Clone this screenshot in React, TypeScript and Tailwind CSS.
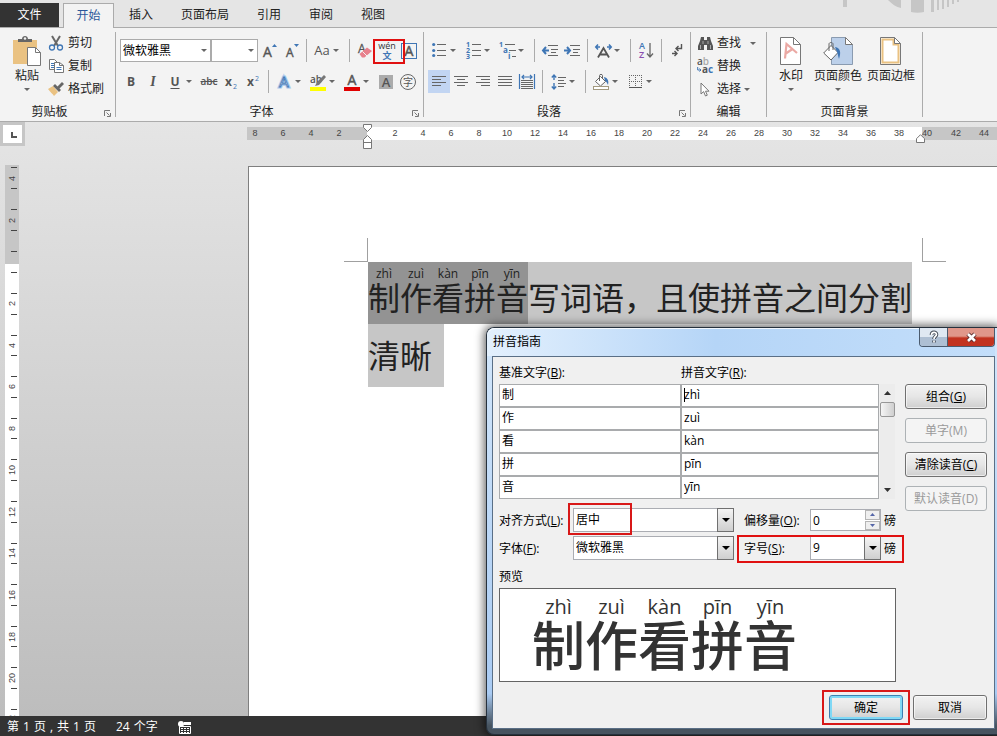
import type { ReactNode } from "react";

function Caret({ className = "" }: { className?: string }) {
  return (
    <svg className={`h-[3px] w-[6px] shrink-0 ${className}`} viewBox="0 0 6 3" aria-hidden="true">
      <path d="M0 0h6L3 3z" fill="#666" />
    </svg>
  );
}

function Svg({ w, h, children }: { w: number; h: number; children: ReactNode }) {
  return (
    <svg width={w} height={h} viewBox={`0 0 ${w} ${h}`} className="shrink-0 overflow-visible" aria-hidden="true">
      {children}
    </svg>
  );
}

function Tool({ label, active, menu, children }: { label: string; active?: boolean; menu?: boolean; children: ReactNode }) {
  return (
    <button
      type="button"
      aria-label={label}
      className={`flex h-full shrink-0 items-center ${menu ? "w-[34px]" : "w-[22px]"} ${active ? "bg-[#c2d5f2]" : ""}`}
    >
      <span className="flex w-[22px] shrink-0 items-center justify-center">{children}</span>
      {menu && <Caret />}
    </button>
  );
}

function Sep() {
  return <span className="mx-1 h-full w-px shrink-0 bg-[#ababab]" />;
}

function Group({ title, width, launcher, children }: { title: string; width: string; launcher?: boolean; children: ReactNode }) {
  return (
    <section className={`relative my-1 flex shrink-0 flex-col border-r border-[#ababab] ${width}`}>
      <div className="h-[75px]">{children}</div>
      <h2 className={`h-[10px] text-center leading-[10px] ${launcher ? "pr-4" : ""}`}>{title}</h2>
      {launcher && (
        <button type="button" aria-label={`${title}设置`} className="absolute right-1 bottom-0">
          <Svg w={7} h={7}>
            <path d="M.5 6V.5H6" fill="none" stroke="#777" />
            <path d="M2.500 2.500l3 3M6.500 3v3.500H3" fill="none" stroke="#777" />
          </Svg>
        </button>
      )}
    </section>
  );
}

function SmallCommand({ icon, text, menu }: { icon: ReactNode; text: string; menu?: string }) {
  return (
    <button type="button" className="flex h-[22px] items-center">
      <span className="mr-1 flex w-4 justify-center">{icon}</span>
      {text}
      {menu && <Caret className={menu} />}
    </button>
  );
}

function BigCommand({ icon, text, menu }: { icon: ReactNode; text: string; menu?: boolean }) {
  return (
    <button type="button" className="flex flex-col items-center pt-1">
      <span className="flex h-[30px] items-center">{icon}</span>
      <span className="mt-0.5 leading-4 whitespace-nowrap">{text}</span>
      {menu && <Caret className="mt-1" />}
    </button>
  );
}

const lines = (rows: [number, number, number][]) =>
  rows.map(([x, y, w]) => <rect key={`${x}-${y}`} x={x} y={y} width={w} height={1} fill="#666" />);

function Ribbon() {
  return (
    <div className="flex border-y border-[#ababab] bg-[#f3f3f3]">
      <Group title="剪贴板" width="w-[116px]" launcher>
        <div className="flex gap-[7px] pl-[13px]">
          <BigCommand
            text="粘贴"
            menu
            icon={
              <Svg w={28} h={30}>
                <path d="M0 4h24v24H0z" fill="#eac282" />
                <path d="M5 6V3h4c0-4 6-4 6 0h4v3z" fill="#666" />
                <circle cx="12" cy="2.500" r="1.200" fill="#f3f3f3" />
                <path d="M14.500 11.500h8l5 5v13h-13z" fill="#fff" stroke="#777" />
                <path d="M22.500 11.500v5h5" fill="none" stroke="#777" />
              </Svg>
            }
          />
          <div className="flex flex-col gap-px whitespace-nowrap">
            <SmallCommand
              text="剪切"
              icon={
                <Svg w={14} h={15}>
                  <path d="M3 0l6 10M11 0L5 10" stroke="#666" strokeWidth="2" />
                  <circle cx="3" cy="11.500" r="2.500" fill="none" stroke="#3f76b5" strokeWidth="1.300" />
                  <circle cx="11" cy="11.500" r="2.500" fill="none" stroke="#3f76b5" strokeWidth="1.300" />
                </Svg>
              }
            />
            <SmallCommand
              text="复制"
              icon={
                <Svg w={15} h={14}>
                  <path d="M.5.500h5l3 3v7h-8z" fill="#fff" stroke="#777" />
                  <path d="M2 4.500h3M2 6.500h3M2 8.500h3" stroke="#3f76b5" />
                  <path d="M5.500 3.500h5l4 3v7h-9z" fill="#fff" stroke="#777" />
                  <path d="M10.500 3.500v3h4" fill="none" stroke="#777" />
                  <path d="M7.500 8.500h5M7.500 10.500h5" stroke="#3f76b5" />
                </Svg>
              }
            />
            <SmallCommand
              text="格式刷"
              icon={
                <Svg w={16} h={14}>
                  <path d="M0 7l5-3 5 6-4 4c-1-2-4-4-6-7z" fill="#eac282" />
                  <path d="M5 4l2-2 6 6-2 2z" fill="#666" />
                  <path d="M9 5l5-5 2 2-5 5z" fill="#666" />
                </Svg>
              }
            />
          </div>
        </div>
      </Group>

      <Group title="字体" width="w-[308px]" launcher>
        <div className="flex flex-col gap-2 pt-[7px] pl-1">
          <div className="flex h-[23px]">
            <span className="relative w-[91px]">
              <select aria-label="字体" className="h-full w-full appearance-none border border-[#ababab] bg-white pl-0.5 text-black">
                <option>微软雅黑</option>
              </select>
              <Caret className="pointer-events-none absolute top-[10px] right-1" />
            </span>
            <span className="relative w-[47px]">
              <input aria-label="字号" type="text" className="h-full w-full border border-[#ababab] bg-white px-1" />
              <Caret className="pointer-events-none absolute top-[10px] right-1" />
            </span>
            <Tool label="增大字号">
              <Svg w={14} h={16}>
                <text x="1" y="14" fontSize="14" fill="#555" stroke="#555" strokeWidth=".4">A</text>
                <path d="M10 4l2.500-3L15 4z" fill="#3f76b5" />
              </Svg>
            </Tool>
            <Tool label="减小字号">
              <Svg w={14} h={16}>
                <text x="2" y="14" fontSize="12" fill="#555" stroke="#555" strokeWidth=".4">A</text>
                <path d="M10 1h5l-2.500 3z" fill="#3f76b5" />
              </Svg>
            </Tool>
            <Sep />
            <Tool label="更改大小写" menu>
              <span className="text-[13px] text-[#555]">Aa</span>
            </Tool>
            <Sep />
            <Tool label="清除格式">
              <Svg w={15} h={16}>
                <text x="0" y="10" fontSize="12" fill="#555" stroke="#555" strokeWidth=".3">A</text>
                <path d="M1.500 11L9 4.500l5 3.500-7.500 6.500H4z" fill="#e8808c" />
                <path d="M4.500 8.500l4.500 4.500" stroke="#f3f3f3" />
              </Svg>
            </Tool>
            <span className="relative">
              <Tool label="拼音指南">
                <Svg w={18} h={18}>
                  <text x="9" y="7" fontSize="9" textAnchor="middle" fill="#333">wén</text>
                  <text x="9" y="17" fontSize="9" fontWeight="700" textAnchor="middle" fill="#3f76b5">文</text>
                </Svg>
              </Tool>
              <span className="pointer-events-none absolute top-0 -left-[3px] z-10 h-[25px] w-8 border-2 border-[#e01010]" />
            </span>
            <Tool label="字符边框">
              <Svg w={16} h={16}>
                <rect x=".5" y=".5" width="15" height="15" fill="none" stroke="#3f76b5" />
                <text x="8" y="13" fontSize="14" textAnchor="middle" fill="#555" stroke="#555" strokeWidth=".5">A</text>
              </Svg>
            </Tool>
          </div>
          <div className="flex h-[23px] text-[#555]">
            <Tool label="加粗"><b>B</b></Tool>
            <Tool label="倾斜"><i className="font-['Liberation_Serif'] text-sm font-bold">I</i></Tool>
            <Tool label="下划线" menu><b className="underline underline-offset-2">U</b></Tool>
            <Tool label="删除线"><span className="text-[10px] font-semibold line-through">abc</span></Tool>
            <Tool label="下标">
              <Svg w={12} h={14}>
                <text x="0" y="11" fontSize="12" fontWeight="700" fill="#555">x</text>
                <text x="8" y="14" fontSize="7" fill="#3f76b5">2</text>
              </Svg>
            </Tool>
            <Tool label="上标">
              <Svg w={12} h={14}>
                <text x="0" y="11" fontSize="12" fontWeight="700" fill="#555">x</text>
                <text x="8" y="6" fontSize="7" fill="#3f76b5">2</text>
              </Svg>
            </Tool>
            <Sep />
            <Tool label="文本效果" menu>
              <Svg w={14} h={15}>
                <text x="7" y="13" fontSize="15" textAnchor="middle" fill="#fff" stroke="#a9c8ec" strokeWidth="3">A</text>
                <text x="7" y="13" fontSize="15" textAnchor="middle" fill="#fff" stroke="#3f76b5" strokeWidth=".8">A</text>
              </Svg>
            </Tool>
            <Tool label="突出显示" menu>
              <Svg w={17} h={18}>
                <text x="0" y="10" fontSize="10" fontWeight="600" fill="#555">ab</text>
                <path d="M14 2l2 2-7 8-4 1 2-4z" fill="#777" />
                <rect y="14" width="16" height="4" fill="#ff0" />
              </Svg>
            </Tool>
            <Tool label="字体颜色" menu>
              <Svg w={16} h={18}>
                <text x="8" y="12" fontSize="14" textAnchor="middle" fill="#555" stroke="#555" strokeWidth=".5">A</text>
                <rect y="14" width="16" height="4" fill="#e00000" />
              </Svg>
            </Tool>
            <Tool label="字符底纹">
              <span className="h-[14px] w-[14px] bg-[#ababab] text-center text-[13px] leading-[14px] font-semibold">A</span>
            </Tool>
            <Tool label="带圈字符">
              <span className="flex h-4 w-4 items-center justify-center rounded-full border border-[#666] text-[10px] leading-none">字</span>
            </Tool>
          </div>
        </div>
      </Group>

      <Group title="段落" width="w-[267px]" launcher>
        <div className="flex flex-col gap-2 pt-[7px] pl-1">
          <div className="flex h-[23px]">
            <Tool label="项目符号" menu>
              <Svg w={14} h={15}>
                {[2, 8, 13].map((y) => <circle key={y} cx="1.700" cy={y - 0.5} r="1.600" fill="#3f76b5" />)}
                {lines([[5, 1, 9], [5, 7, 9], [5, 12, 9]])}
              </Svg>
            </Tool>
            <Tool label="编号" menu>
              <Svg w={15} h={17}>
                {[1, 2, 3].map((n) => <text key={n} x="0" y={n * 6 - 1} fontSize="7" fontWeight="700" fill="#3f76b5">{n}</text>)}
                {lines([[6, 2, 9], [6, 8, 9], [6, 13, 9]])}
              </Svg>
            </Tool>
            <Tool label="多级列表" menu>
              <Svg w={17} h={17}>
                <text x="0" y="5" fontSize="7" fontWeight="700" fill="#3f76b5">1</text>
                <text x="4" y="11" fontSize="8" fontWeight="700" fill="#3f76b5">a</text>
                <text x="9" y="17" fontSize="8" fontWeight="700" fill="#3f76b5">i</text>
                {lines([[6, 2, 10], [10, 8, 7], [13, 14, 4]])}
              </Svg>
            </Tool>
            <Sep />
            <Tool label="减少缩进">
              <Svg w={16} h={11}>
                {lines([[6, 0, 10], [9, 4, 7], [9, 7, 5], [6, 10, 10]])}
                <path d="M7 5.500H1M4 2L1 5.500 4 9" fill="none" stroke="#3f76b5" strokeWidth="2" />
              </Svg>
            </Tool>
            <Tool label="增加缩进">
              <Svg w={16} h={11}>
                {lines([[6, 0, 10], [9, 4, 7], [9, 7, 5], [6, 10, 10]])}
                <path d="M0 5.500h6M3 2l3 3.500L3 9" fill="none" stroke="#3f76b5" strokeWidth="2" />
              </Svg>
            </Tool>
            <Sep />
            <Tool label="中文版式" menu>
              <Svg w={17} h={14}>
                <path d="M5 3H1M3 .5L.8 3 3 5.500M12 3h4M14 .5L16.200 3 14 5.500" fill="none" stroke="#3f76b5" strokeWidth="1.600" />
                <path d="M3 13.500L8.500 4 14 13.500M5 10.500h7" fill="none" stroke="#555" strokeWidth="1.800" />
              </Svg>
            </Tool>
            <Sep />
            <Tool label="排序">
              <Svg w={14} h={17}>
                <text x="0" y="7" fontSize="9" fontWeight="600" fill="#3f76b5">A</text>
                <text x="0" y="16" fontSize="9" fontWeight="600" fill="#8a4fb0">Z</text>
                <path d="M11 1v14M8 11.500l3 3.500 3-3.500" fill="none" stroke="#666" strokeWidth="1.300" />
              </Svg>
            </Tool>
            <Sep />
            <Tool label="显示编辑标记">
              <Svg w={11} h={13}>
                <path d="M9.500 0v4.500H4M6.500 2L4 4.500 6.500 7" fill="none" stroke="#555" strokeWidth="1.400" />
                <path d="M0 9.500h5M2.500 7L5 9.500 2.500 12" fill="none" stroke="#555" strokeWidth="1.400" />
              </Svg>
            </Tool>
          </div>
          <div className="flex h-[23px]">
            <Tool label="左对齐" active>
              <Svg w={14} h={11}>{lines([[0, 0, 14], [0, 3, 9], [0, 6, 14], [0, 9, 9]])}</Svg>
            </Tool>
            <Tool label="居中">
              <Svg w={14} h={11}>{lines([[0, 0, 14], [3, 3, 8], [0, 6, 14], [3, 9, 8]])}</Svg>
            </Tool>
            <Tool label="右对齐">
              <Svg w={14} h={11}>{lines([[0, 0, 14], [5, 3, 9], [0, 6, 14], [5, 9, 9]])}</Svg>
            </Tool>
            <Tool label="两端对齐">
              <Svg w={14} h={11}>{lines([[0, 0, 14], [0, 3, 14], [0, 6, 14], [0, 9, 14]])}</Svg>
            </Tool>
            <Tool label="分散对齐">
              <Svg w={16} h={16}>
                <path d="M.5 0v15M15.500 0v15M3 3h10M5 1L3 3l2 2M11 1l2 2-2 2" fill="none" stroke="#3f76b5" strokeWidth="1.200" />
                {lines([[2, 6, 12], [2, 8, 12], [2, 10, 12], [2, 12, 12], [2, 14, 12]])}
              </Svg>
            </Tool>
            <Sep />
            <Tool label="行距" menu>
              <Svg w={15} h={16}>
                <path d="M3 1v5M.8 3.500L3 1l2.200 2.500M3 9v6M.8 12.500L3 15l2.200-2.500" fill="none" stroke="#3f76b5" strokeWidth="1.400" />
                {lines([[7, 3, 8], [7, 6, 6], [7, 9, 8], [7, 12, 6]])}
              </Svg>
            </Tool>
            <Sep />
            <Tool label="底纹" menu>
              <Svg w={17} h={16}>
                <path d="M2.500 7.500l5-5 5 5-5 4.500z" fill="#fff" stroke="#666" />
                <path d="M6.500 7V1.500c0-1.500 3-1.500 3 0V4" fill="none" stroke="#666" />
                <path d="M11 3c4 1 5 4 4 8-1-2-1-3-3-4z" fill="#3f76b5" />
                <rect x=".5" y="12.500" width="15" height="3" fill="#fff" stroke="#a39a80" />
              </Svg>
            </Tool>
            <Tool label="边框" menu>
              <Svg w={13} h={13}>
                <path d="M.5 0v12M6.500 0v12M12.500 0v12M0 .5h13M0 6.500h13" stroke="#666" strokeDasharray="1 1" />
                <path d="M0 12.500h13" stroke="#555" />
              </Svg>
            </Tool>
          </div>
        </div>
      </Group>

      <Group title="编辑" width="w-[76px]">
        <div className="flex flex-col gap-px pl-[6px]">
          <SmallCommand
            text="查找"
            menu="ml-[9px]"
            icon={
              <Svg w={15} h={13}>
                <path d="M3 0h3v3h3V0h3l1 4 2 5v4H9V8H6v5H0V9l2-5z" fill="#555" />
                <path d="M2.500 8v4M12.500 8v4M5 4v3M10 4v3" stroke="#aaa" />
              </Svg>
            }
          />
          <SmallCommand
            text="替换"
            icon={
              <Svg w={16} h={16}>
                <text x="0" y="7" fontSize="10" fontWeight="600" fill="#555">a<tspan fill="#aaa">b</tspan></text>
                <text x="5" y="15" fontSize="10" fontWeight="700" fill="#555">a<tspan fill="#3f76b5">c</tspan></text>
                <path d="M.7 9v3H4M2.500 10.500L4 12l-1.500 1.500" fill="none" stroke="#3f76b5" />
              </Svg>
            }
          />
          <SmallCommand
            text="选择"
            menu="ml-[3px]"
            icon={
              <Svg w={10} h={15}>
                <path d="M1 1v11l2.600-2.400L5.500 14l1.800-.8-1.800-4H9z" fill="#fff" stroke="#777" />
              </Svg>
            }
          />
        </div>
      </Group>

      <Group title="页面背景" width="w-[156px]">
        <div className="flex justify-end gap-[5px] pr-[7px]">
          <div className="mr-[6px] flex">
            <BigCommand
              text="水印"
              menu
              icon={
                <Svg w={21} h={28}>
                  <path d="M.5.500h13l7 7v20H.5z" fill="#fff" stroke="#777" />
                  <path d="M13.500.500v7h7" fill="none" stroke="#777" />
                  <path d="M5 21.500L6.500 7 17 16M5.800 16.500l6-4" fill="none" stroke="#eba9a4" strokeWidth="2.200" />
                </Svg>
              }
            />
          </div>
          <BigCommand
            text="页面颜色"
            menu
            icon={
              <Svg w={30} h={28}>
                <path d="M8.500.500h14l7 7v20h-21z" fill="#bcd0ea" stroke="#8a9bb0" />
                <path d="M22.500.500v7h7z" fill="#fff" stroke="#777" />
                <path d="M.7 16L8 8.500l7 7-7 7.500z" fill="#fff" stroke="#666" />
                <path d="M6 14V7c0-2 4-2 4 0v6" fill="none" stroke="#666" />
                <path d="M12 10c6 1 6 6 4 12-1-3-1-5-2-7z" fill="#3f76b5" />
              </Svg>
            }
          />
          <BigCommand
            text="页面边框"
            icon={
              <Svg w={21} h={28}>
                <path d="M.5.500h14l6 6v21H.5z" fill="#fff" stroke="#777" />
                <path d="M2.500 2.500h11v5h5v18h-16z" fill="none" stroke="#eac282" strokeWidth="2" />
                <path d="M14.500.500v6h6z" fill="#fff" stroke="#777" />
              </Svg>
            }
          />
        </div>
      </Group>
    </div>
  );
}

const before = [8, 6, 4, 2];
const inside = Array.from({ length: 19 }, (_, i) => i * 2 + 2);
const after = [42, 44];

function HorizontalRuler() {
  return (
    <div className="relative mt-[5px] ml-[222px] flex h-[13px] min-w-0 flex-1 text-center font-['Liberation_Sans',sans-serif] text-[9px] leading-[13px] text-[#444]">
      <div className="flex w-[120px] shrink-0 justify-end overflow-hidden bg-[#c6c6c6] pr-[14px]">
        {before.map((n) => <span key={n} className="w-7 shrink-0">{n}</span>)}
      </div>
      <div className="flex w-[555px] shrink-0 overflow-hidden bg-white pl-[14px]">
        {inside.map((n) => <span key={n} className="w-7 shrink-0">{n}</span>)}
      </div>
      <div className="flex min-w-0 flex-1 overflow-hidden bg-[#c6c6c6]">
        <span className="w-5 shrink-0 text-left">40</span>
        {after.map((n) => <span key={n} className="w-7 shrink-0">{n}</span>)}
      </div>
      <svg className="absolute -top-[3px] left-[116px]" width="9" height="25" viewBox="0 0 9 25" aria-hidden="true">
        <path d="M.5.500h8v3l-4 4-4-4z" fill="#fff" stroke="#777" />
        <path d="M4.500 11.500l4 4v9h-8v-9zM.5 18.500h8" fill="#fff" stroke="#777" />
      </svg>
      <svg className="absolute top-[7px] left-[669px]" width="9" height="9" viewBox="0 0 9 9" aria-hidden="true">
        <path d="M4.500.700l4 4v3.800h-8V4.700z" fill="#fff" stroke="#777" />
      </svg>
    </div>
  );
}

function Tick() {
  return <span className="mr-0.5 h-px w-[6px] shrink-0 self-end bg-[#444]" />;
}

function RulerCell({ n, className }: { n: number; className: string }) {
  return (
    <div className={`flex flex-col items-center justify-between py-[10px] ${className}`}>
      <Tick />
      <span className="flex h-0 items-center">
        <span className="rotate-180 leading-3 [writing-mode:vertical-rl]">{n}</span>
      </span>
      <Tick />
    </div>
  );
}

function VerticalRuler() {
  return (
    <div className="ml-[5px] flex w-[14px] shrink-0 flex-col overflow-hidden font-['Liberation_Sans',sans-serif] text-[9px] text-[#444]">
      <div className="flex h-[99px] shrink-0 flex-col justify-end overflow-hidden bg-[#c6c6c6] pb-[12px]">
        <RulerCell n={4} className="h-[42px] shrink-0" />
        <RulerCell n={2} className="mb-[10px] h-[42px] shrink-0" />
        <Tick />
      </div>
      <div className="flex min-h-0 flex-1 flex-col overflow-hidden bg-white pt-2">
        <Tick />
        <div className="mt-[10px] flex h-[416px] shrink-0 flex-col">
          {inside.slice(0, 10).map((n) => <RulerCell key={n} n={n} className="min-h-0 flex-1" />)}
        </div>
        <RulerCell n={22} className="h-[42px] shrink-0" />
      </div>
    </div>
  );
}

const syllables = [
  ["制", "zhì"],
  ["作", "zuì"],
  ["看", "kàn"],
  ["拼", "pīn"],
  ["音", "yīn"],
];

function Page() {
  return (
    <main className="mt-px ml-[229px] min-w-0 flex-1 overflow-hidden border-t border-l border-[#7f7f7f] bg-white pt-[71px] text-[#222]">
      <div className="flex pl-[95px]">
        <span className="h-6 w-6 shrink-0 border-r border-b border-[#a0a0a0]" />
        <span className="w-[554px] shrink-0" />
        <span className="h-6 w-6 shrink-0 border-b border-l border-[#a0a0a0]" />
      </div>
      <div className="pl-[119px] text-[32px] whitespace-nowrap">
        <p className="flex h-[62px] w-[544px] bg-[#c6c6c6]">
          <span className="flex bg-[#939393]">
            {syllables.map(([base, reading]) => (
              <span key={base} className="flex w-8 flex-col items-center">
                <span className="pt-1 text-[12px] leading-4">{reading}</span>
                <span className="leading-8">{base}</span>
              </span>
            ))}
          </span>
          <span className="pt-5 leading-8">写词语，且使拼音之间分割</span>
        </p>
        <p className="h-[63px] w-[76px] bg-[#c6c6c6] pt-4 leading-8">清晰</p>
      </div>
    </main>
  );
}

function DialogButton({ text, hotkey, disabled, primary, width }: { text: string; hotkey?: string; disabled?: boolean; primary?: boolean; width: string }) {
  const look = disabled
    ? "border-[#adb2b5] bg-[#f4f4f4] text-[#9a9a9a]"
    : primary
      ? "border-[#3c7fb1] bg-linear-to-b from-[#f2f2f2] via-[#e6e6e6] to-[#cfcfcf] text-black inset-ring-2 inset-ring-[#7fd8f5]"
      : "border-[#707070] bg-linear-to-b from-[#f2f2f2] via-[#e6e6e6] to-[#cfcfcf] text-black inset-ring inset-ring-white/60";
  return (
    <button type="button" disabled={disabled} className={`h-[25px] rounded-[3px] border leading-4 whitespace-nowrap ${width} ${look}`}>
      {text}
      {hotkey && <>({disabled ? hotkey : <u>{hotkey}</u>})</>}
    </button>
  );
}

function Key({ text, hotkey, id, className = "" }: { text: string; hotkey: string; id: string; className?: string }) {
  return (
    <label htmlFor={id} className={`shrink-0 whitespace-nowrap ${className}`}>
      {text}(<u>{hotkey}</u>):
    </label>
  );
}

function DialogSelect({ id, value, width }: { id: string; value: string; width: string }) {
  return (
    <span className={`relative h-full shrink-0 ${width}`}>
      <select id={id} className="h-full w-full appearance-none border border-[#abadb3] bg-white pl-0.5">
        <option>{value}</option>
      </select>
      <span className="pointer-events-none absolute inset-y-0 right-0 flex w-[17px] items-center justify-center border border-[#707070] bg-linear-to-b from-[#f4f4f4] to-[#cfcfcf]">
        <svg width="8" height="4" viewBox="0 0 8 4" aria-hidden="true"><path d="M0 0h8L4 4z" fill="#000" /></svg>
      </span>
    </span>
  );
}

function PhoneticDialog() {
  return (
    <div
      role="dialog"
      aria-labelledby="dialog-title"
      className="absolute top-[327px] right-0 left-[486px] flex h-[408px] flex-col rounded-l-lg border border-r-0 border-[#26313d] bg-linear-to-b from-[#d3e7fb] from-0% via-[#a9cbf3] via-90% to-[#46535f] to-98% pr-0.5 pb-[5px] pl-[5px] text-black shadow-[0_0_10px_2px_rgba(0,0,0,0.6)]"
    >
      <div className="-ml-[5px] flex h-7 shrink-0 items-start justify-between rounded-tl-lg bg-linear-to-r from-[#e3f0fd] via-[#b5d5f7] via-45% to-[#c3defa] pl-[6px] inset-shadow-[0_1px_0_rgba(255,255,255,0.8)]">
        <h1 id="dialog-title" className="pt-[6px] leading-4">拼音指南</h1>
        <div className="flex h-[19px] overflow-hidden rounded-b border border-t-0 border-[#4b5b6e]">
          <button type="button" aria-label="帮助" className="flex w-7 items-center justify-center border-r border-[#4b5b6e] bg-linear-to-b from-[#dfe8f2] from-50% to-[#aebfd3] to-50%">
            <svg width="12" height="14" viewBox="0 0 12 14" aria-hidden="true">
              <path d="M3.500 5c0-3.500 5-3.500 5-.5C8.500 6.500 6 6.500 6 9M6 10.500v2" fill="none" stroke="#444c58" strokeWidth="3.600" />
              <path d="M3.500 5c0-3.500 5-3.500 5-.5C8.500 6.500 6 6.500 6 9M6 10.500v2" fill="none" stroke="#fff" strokeWidth="1.700" />
            </svg>
          </button>
          <button type="button" aria-label="关闭" className="flex w-[46px] items-center justify-center bg-linear-to-b from-[#e0978a] from-45% to-[#c23320] to-55%">
            <svg width="13" height="11" viewBox="0 0 13 11" aria-hidden="true">
              <path d="M3 2l7 7M10 2L3 9" stroke="#5a2a2a" strokeWidth="4.500" />
              <path d="M3 2l7 7M10 2L3 9" stroke="#fff" strokeWidth="2.600" />
            </svg>
          </button>
        </div>
      </div>

      <div className="flex min-h-0 flex-1 flex-col border border-[#5a6f86] bg-[#f0f0f0] pt-2 pr-[7px] pl-[6px]">
        <div className="flex justify-between">
          <div className="w-[397px] shrink-0">
            <div className="flex leading-4">
              <Key id="base-0" text="基准文字" hotkey="B" className="w-[182px]" />
              <Key id="ruby-0" text="拼音文字" hotkey="R" />
            </div>
            <div className="mt-[3px] flex gap-px">
              <div>
                {syllables.map(([base, reading], i) => (
                  <div key={base} className="flex h-[23px]">
                    <input id={`base-${i}`} aria-label={`基准文字 ${i + 1}`} defaultValue={base} className="w-[182px] border border-[#a9abad] bg-white px-0.5 pb-0.5" />
                    <span className="relative flex">
                      <input id={`ruby-${i}`} aria-label={`拼音文字 ${i + 1}`} defaultValue={reading} className="w-[198px] border border-[#a9abad] bg-white px-0.5 pb-0.5" />
                      {i === 0 && <span className="absolute top-1 left-[3px] h-[14px] w-px bg-black" />}
                    </span>
                  </div>
                ))}
              </div>
              <div className="flex w-[15px] flex-col items-center bg-[#ececec] py-[7px]">
                <svg width="7" height="4" viewBox="0 0 7 4" aria-hidden="true"><path d="M0 4h7L3.500 0z" fill="#333" /></svg>
                <span className="mt-[7px] h-[15px] w-[15px] rounded-[2px] border border-[#979797] bg-linear-to-r from-[#f5f5f5] to-[#cfcfcf]" />
                <svg className="mt-auto" width="7" height="4" viewBox="0 0 7 4" aria-hidden="true"><path d="M0 0h7L3.500 4z" fill="#333" /></svg>
              </div>
            </div>

            <div className="mt-[9px] flex flex-col gap-1">
              <div className="flex h-6 items-center">
                <Key id="align" text="对齐方式" hotkey="L" className="w-[74px] pt-0.5" />
                <span className="relative flex h-full">
                  <DialogSelect id="align" value="居中" width="w-[161px]" />
                  <span className="pointer-events-none absolute -top-[5px] -left-[5px] h-8 w-16 border-2 border-[#d81818]" />
                </span>
                <Key id="offset" text="偏移量" hotkey="O" className="ml-[10px] w-[66px] pt-0.5" />
                <span className="relative h-[22px] w-[71px] shrink-0">
                  <input id="offset" type="text" defaultValue="0" className="h-full w-full border border-[#abadb3] bg-white px-0.5" />
                  <span className="absolute inset-y-px right-px flex w-[15px] flex-col gap-px">
                    <button type="button" aria-label="增加" className="flex flex-1 items-center justify-center border border-[#b5b5b5] bg-[#efefef]">
                      <svg width="5" height="3" viewBox="0 0 5 3" aria-hidden="true"><path d="M0 3h5L2.500 0z" fill="#5566a8" /></svg>
                    </button>
                    <button type="button" aria-label="减少" className="flex flex-1 items-center justify-center border border-[#b5b5b5] bg-[#efefef]">
                      <svg width="5" height="3" viewBox="0 0 5 3" aria-hidden="true"><path d="M0 0h5L2.500 3z" fill="#5566a8" /></svg>
                    </button>
                  </span>
                </span>
                <span className="ml-[3px] pt-0.5">磅</span>
              </div>
              <div className="flex h-6 items-center">
                <Key id="font" text="字体" hotkey="F" className="w-[74px] pt-0.5" />
                <DialogSelect id="font" value="微软雅黑" width="w-[161px]" />
                <span className="relative ml-[10px] flex h-full items-center">
                  <Key id="size" text="字号" hotkey="S" className="w-[66px] pt-0.5" />
                  <DialogSelect id="size" value="9" width="w-[71px]" />
                  <span className="ml-[3px] pt-0.5">磅</span>
                  <span className="pointer-events-none absolute -top-px -right-2 -left-[7px] h-7 border-2 border-[#e01010]" />
                </span>
              </div>
            </div>

            <h2 className="mt-[9px] leading-4">预览</h2>
            <div className="mt-[3px] flex h-[94px] border border-[#646464] bg-white pl-8 text-[#333]">
              {syllables.map(([base, reading]) => (
                <span key={base} className="flex w-[53px] flex-col items-center">
                  <span className="pt-1 text-[20px] leading-7">{reading}</span>
                  <span className="text-[53px] leading-[50px] font-medium">{base}</span>
                </span>
              ))}
            </div>
          </div>

          <div className="flex flex-col gap-[9px] pt-[19px]">
            <DialogButton width="w-[82px]" text="组合" hotkey="G" />
            <DialogButton width="w-[82px]" text="单字" hotkey="M" disabled />
            <DialogButton width="w-[82px]" text="清除读音" hotkey="C" />
            <DialogButton width="w-[82px]" text="默认读音" hotkey="D" disabled />
          </div>
        </div>

        <div className="mt-[13px] flex justify-end gap-[10px]">
          <span className="relative flex">
            <DialogButton width="w-[74px]" text="确定" primary />
            <span className="pointer-events-none absolute -inset-x-[7px] -inset-y-[5px] border-2 border-[#d81818]" />
          </span>
          <DialogButton width="w-[74px]" text="取消" />
        </div>
      </div>
    </div>
  );
}

export default function App() {
  return (
    <div className="relative flex h-screen flex-col overflow-hidden bg-[#e5e5e5] text-[12px] text-[#222] [font-family:'Open_Sans','Noto_Sans_CJK_SC',sans-serif]">
      <svg className="absolute top-0 left-[840px]" width="120" height="14" viewBox="0 0 120 14" aria-hidden="true">
        <path d="M3 0h4v7H3zM48 0h13v8c-5-1-9-4-13-8zM71 0h13v12c-4 1-9 1-13 0zM91 0h3v12h-3zM97 0h2v10h-2zM102 0h2v9h-2zM107 0h2v7h-2zM112 0h2v4h-2zM117 0h2v2h-2z" fill="#c6c6c6" />
      </svg>
      <nav className="relative z-10 -mb-px flex h-7 shrink-0 items-stretch pt-[3px]">
        <button type="button" className="mb-px w-[59px] bg-[#333] text-white">文件</button>
        <button type="button" className="mr-px ml-1 w-[51px] border border-b-0 border-[#ababab] bg-[#f3f3f3] text-[#2b579a]">开始</button>
        {["插入", "页面布局", "引用", "审阅", "视图"].map((t) => (
          <button key={t} type="button" className="mb-px px-[14px]">{t}</button>
        ))}
      </nav>
      <Ribbon />
      <div className="flex min-h-0 flex-1 flex-col bg-linear-to-b from-[#e5e5e5] to-[#bdbdbd]">
        <div className="flex h-[43px] shrink-0">
          <button type="button" aria-label="制表符" className="flex h-6 w-[25px] shrink-0 items-end justify-end border-3 border-[#c6c6c6] bg-white p-[5px]">
            <span className="h-[6px] w-[6px] border-b-2 border-l-2 border-[#555]" />
          </button>
          <HorizontalRuler />
        </div>
        <div className="flex min-h-0 flex-1">
          <VerticalRuler />
          <Page />
        </div>
      </div>
      <footer className="flex h-5 shrink-0 items-center bg-[#333] pt-0.5 pl-[7px] text-white">
        <p className="flex gap-1">
          {["第", "1", "页", ",", "共", "1", "页"].map((part, i) => <span key={i}>{part}</span>)}
        </p>
        <p className="ml-5 flex gap-1"><span>24</span><span>个字</span></p>
        <button type="button" aria-label="录制宏" className="ml-5">
          <Svg w={13} h={13}>
            <path d="M1.500 5.500h11v7h-11z" fill="none" stroke="#fff" />
            <path d="M6 1h7v3H6z" fill="#fff" />
            <circle cx="3" cy="3" r="3" fill="#fff" />
            <path d="M3 7.500h8M3 9.500h8M3 11.500h8" stroke="#fff" strokeDasharray="2 1" />
          </Svg>
        </button>
      </footer>
      <PhoneticDialog />
    </div>
  );
}
